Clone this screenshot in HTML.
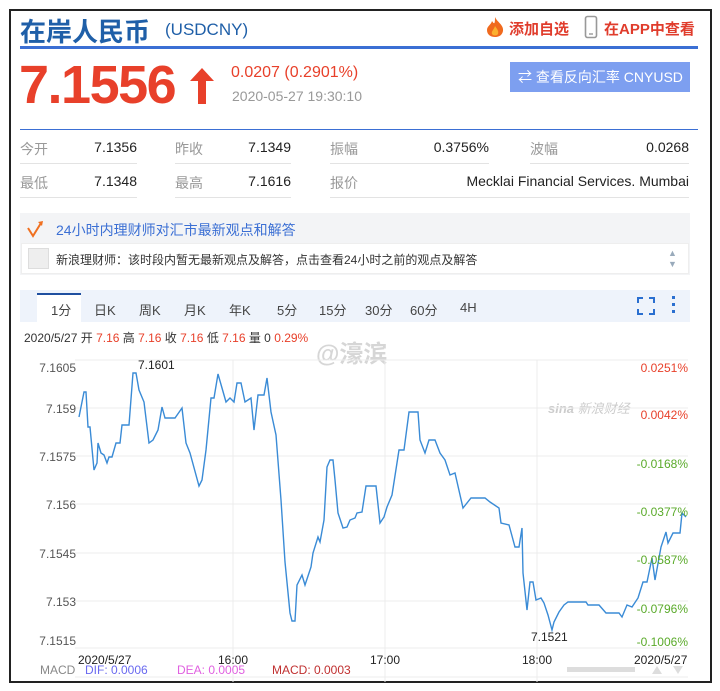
<!DOCTYPE html>
<html><head><meta charset="utf-8"><style>
*{margin:0;padding:0;box-sizing:border-box}
body{width:720px;height:691px;background:#fff;font-family:"Liberation Sans","Noto Sans CJK SC",sans-serif;position:relative;overflow:hidden}
.a{position:absolute;white-space:nowrap}
.frame{position:absolute;left:9px;top:9px;width:703px;height:674px;border:2px solid #222}
.lb{color:#999;font-size:14px}
.v{color:#222;font-size:14px;text-align:right}
.ul{position:absolute;height:1px;background:#e3e3e3}
.tab{position:absolute;top:300px;font-size:13px;color:#444}
</style></head><body>
<div class="frame"></div>
<div class="a" style="left:20px;top:12px;font-size:26px;font-weight:bold;color:#1f5fa8">在岸人民币</div>
<div class="a" style="left:165px;top:20px;font-size:17px;color:#1f5fa8">(USDCNY)</div>
<svg class="a" style="left:484px;top:16px" width="22" height="22" viewBox="0 0 22 22"><path d="M11 1C13 6 20 9 19 15C18 20 14 21 11 21C7 21 3 19 3 14C3 10 7 9 8 5C10 8 11 9 11 1Z" fill="#f06a1e"/><path d="M11 10C13 13 15 15 14 18C13 20 9 20 8 18C7 15 10 14 11 10Z" fill="#fbb02f"/></svg>
<div class="a" style="left:509px;top:18px;font-size:15px;font-weight:bold;color:#e03c2c">添加自选</div>
<svg class="a" style="left:584px;top:15px" width="14" height="24" viewBox="0 0 14 24"><rect x="1.5" y="1.5" width="11" height="21" rx="2" fill="none" stroke="#999" stroke-width="1.6"/><line x1="5" y1="19" x2="9" y2="19" stroke="#999" stroke-width="1.4"/></svg>
<div class="a" style="left:604px;top:18px;font-size:15px;font-weight:bold;color:#e03c2c">在APP中查看</div>
<div class="a" style="left:20px;top:46px;width:678px;height:3px;background:#3b6fd4"></div>
<div class="a" style="left:19px;top:54px;font-size:54px;font-weight:bold;color:#e8402a;letter-spacing:-1.5px">7.1556</div>
<svg class="a" style="left:187px;top:66px" width="30" height="40" viewBox="0 0 30 40"><path d="M15 2L27 15H19V38H11V15H3Z" fill="#e8402a"/></svg>
<div class="a" style="left:231px;top:64px;font-size:16px;color:#e8402a">0.0207 (0.2901%)</div>
<div class="a" style="left:232px;top:88px;font-size:14px;color:#999">2020-05-27 19:30:10</div>
<div class="a" style="left:510px;top:62px;width:180px;height:30px;background:#7d9ff0;color:#fff;font-size:14px;line-height:30px;padding-left:8px">⇄ 查看反向汇率 CNYUSD</div>
<div class="a" style="left:20px;top:129px;width:678px;height:1px;background:#3b6fd4"></div>
<div class="a lb" style="left:20px;top:139px">今开</div><div class="a v" style="left:60px;width:77px;top:139px">7.1356</div>
<div class="a lb" style="left:175px;top:139px">昨收</div><div class="a v" style="left:210px;width:81px;top:139px">7.1349</div>
<div class="a lb" style="left:330px;top:139px">振幅</div><div class="a v" style="left:400px;width:89px;top:139px">0.3756%</div>
<div class="a lb" style="left:530px;top:139px">波幅</div><div class="a v" style="left:600px;width:89px;top:139px">0.0268</div>
<div class="ul" style="left:20px;top:163px;width:117px"></div><div class="ul" style="left:175px;top:163px;width:116px"></div><div class="ul" style="left:330px;top:163px;width:159px"></div><div class="ul" style="left:530px;top:163px;width:159px"></div>
<div class="a lb" style="left:20px;top:173px">最低</div><div class="a v" style="left:60px;width:77px;top:173px">7.1348</div>
<div class="a lb" style="left:175px;top:173px">最高</div><div class="a v" style="left:210px;width:81px;top:173px">7.1616</div>
<div class="a lb" style="left:330px;top:173px">报价</div><div class="a v" style="left:400px;width:289px;top:173px">Mecklai Financial Services. Mumbai</div>
<div class="ul" style="left:20px;top:197px;width:117px"></div><div class="ul" style="left:175px;top:197px;width:116px"></div><div class="ul" style="left:330px;top:197px;width:359px"></div>
<div class="a" style="left:20px;top:213px;width:670px;height:62px;background:#f3f4f6"></div>
<svg class="a" style="left:26px;top:219px" width="20" height="20" viewBox="0 0 20 20"><path d="M2 9L7 17L15 4" fill="none" stroke="#f07020" stroke-width="2"/><path d="M12 3L17 2L16 7Z" fill="#f07020"/></svg>
<div class="a" style="left:56px;top:220px;font-size:14px;color:#3b6fd4">24小时内理财师对汇市最新观点和解答</div>
<div class="a" style="left:21px;top:243px;width:668px;height:31px;background:#fff;border:1px solid #eee"></div>
<div class="a" style="left:28px;top:248px;width:21px;height:21px;background:#eee;border:1px solid #ddd"></div>
<div class="a" style="left:56px;top:251px;font-size:12px;color:#333">新浪理财师：该时段内暂无最新观点及解答，点击查看24小时之前的观点及解答</div>
<div class="a" style="left:668px;top:248px;font-size:9px;color:#9ab;line-height:11px">▲<br>▼</div>
<div class="a" style="left:20px;top:290px;width:670px;height:32px;background:#eef3fb"></div>
<div class="a" style="left:37px;top:293px;width:44px;height:29px;background:#fff;border-top:2px solid #1f4fa0"></div>
<div class="tab" style="left:51px">1分</div><div class="tab" style="left:94px">日K</div><div class="tab" style="left:139px">周K</div><div class="tab" style="left:184px">月K</div><div class="tab" style="left:229px">年K</div><div class="tab" style="left:277px">5分</div><div class="tab" style="left:319px">15分</div><div class="tab" style="left:365px">30分</div><div class="tab" style="left:410px">60分</div><div class="tab" style="left:460px">4H</div>
<svg class="a" style="left:637px;top:297px" width="18" height="18" viewBox="0 0 18 18" fill="none" stroke="#2a6fd0" stroke-width="2"><path d="M1 6V1H6M12 1H17V6M17 12V17H12M6 17H1V12"/></svg>
<div class="a" style="left:672px;top:296px;width:3px;height:3px;background:#2a6fd0;box-shadow:0 7px 0 #2a6fd0,0 14px 0 #2a6fd0"></div>
<div class="a" style="left:24px;top:329px;font-size:12px;color:#333">2020/5/27 开 <span style="color:#e8402a">7.16</span> 高 <span style="color:#e8402a">7.16</span> 收 <span style="color:#e8402a">7.16</span> 低 <span style="color:#e8402a">7.16</span> 量 0 <span style="color:#e8402a">0.29%</span></div>
<div class="a" style="left:316px;top:334px;font-size:24px;color:rgba(200,200,200,0.75);font-weight:bold">@濠滨</div>
<div class="a" style="left:548px;top:398px;font-size:13px;color:#ccc;font-style:italic"><b>sina</b> 新浪财经</div>
<svg class="a" style="left:0;top:0" width="720" height="691">
<g stroke="#ececec" stroke-width="1">
<line x1="75" y1="360" x2="688" y2="360"/><line x1="75" y1="408" x2="688" y2="408"/><line x1="75" y1="456" x2="688" y2="456"/><line x1="75" y1="504" x2="688" y2="504"/><line x1="75" y1="553" x2="688" y2="553"/><line x1="75" y1="601" x2="688" y2="601"/><line x1="75" y1="648" x2="688" y2="648"/>
<line x1="233" y1="360" x2="233" y2="682"/><line x1="385" y1="360" x2="385" y2="682"/><line x1="537" y1="360" x2="537" y2="682"/>
<line x1="75" y1="677" x2="688" y2="677"/>
</g>
<polyline fill="none" stroke="#3a8bd6" stroke-width="1.4" points="79,417 84,392 86,392 88,427 90,427 94,470 97,463 98,443 101,453 104,455 107,463 109,457 112,457 116,443 120,443 122,425 129,425 133,373 136,373 139,390 144,402 149,443 153,440 158,430 162,407 165,418 175,418 182,408 186,443 190,453 199,486 202,480 206,450 211,398 214,398 218,374 222,388 226,402 230,398 234,402 237,383 241,383 245,402 251,398 254,430 258,395 264,395 267,378 271,412 276,435 281,500 285,562 290,613 292,621 295,621 297,585 302,575 305,585 311,567 313,553 318,537 320,542 324,520 327,467 330,460 333,460 335,480 338,513 343,528 347,527 350,520 355,518 357,513 362,512 366,486 376,486 380,523 384,517 387,507 392,495 399,450 404,450 409,412 418,412 420,440 425,453 429,440 435,440 440,453 445,460 450,475 455,473 463,508 471,498 485,498 490,502 499,508 501,523 509,525 515,547 519,547 522,528 523,573 527,610 530,582 533,582 536,600 541,598 544,603 548,615 552,630 554,622 559,612 564,605 568,602 586,602 588,605 599,605 606,613 619,613 622,617 627,605 632,607 638,598 643,582 647,582 652,558 655,580 661,547 666,532 668,543 673,533 680,533 682,513 686,517"/>
<g font-family="Liberation Sans, sans-serif" font-size="12" fill="#555" text-anchor="end">
<text x="76" y="372">7.1605</text><text x="76" y="413">7.159</text><text x="76" y="461">7.1575</text><text x="76" y="509">7.156</text><text x="76" y="558">7.1545</text><text x="76" y="606">7.153</text><text x="76" y="645">7.1515</text>
</g>
<g font-family="Liberation Sans, sans-serif" font-size="12" text-anchor="end">
<text x="688" y="372" fill="#e8402a">0.0251%</text><text x="688" y="419" fill="#e8402a">0.0042%</text><text x="688" y="468" fill="#5aaa2a">-0.0168%</text><text x="688" y="516" fill="#5aaa2a">-0.0377%</text><text x="688" y="564" fill="#5aaa2a">-0.0587%</text><text x="688" y="613" fill="#5aaa2a">-0.0796%</text><text x="688" y="646" fill="#5aaa2a">-0.1006%</text>
</g>
<g font-family="Liberation Sans, sans-serif" font-size="12" fill="#222">
<text x="138" y="369">7.1601</text><text x="531" y="641">7.1521</text>
<text x="78" y="664">2020/5/27</text><text x="218" y="664">16:00</text><text x="370" y="664">17:00</text><text x="522" y="664">18:00</text><text x="634" y="664">2020/5/27</text>
<text x="40" y="674" fill="#888">MACD</text><text x="85" y="674" fill="#6a6af0">DIF: 0.0006</text><text x="177" y="674" fill="#e060e0">DEA: 0.0005</text><text x="272" y="674" fill="#c03030">MACD: 0.0003</text>
</g>
<g fill="#ddd"><rect x="567" y="667" width="68" height="5"/><path d="M652 674L657 666L662 674Z"/><path d="M673 666L683 666L678 674Z"/></g>
</svg>
</body></html>
